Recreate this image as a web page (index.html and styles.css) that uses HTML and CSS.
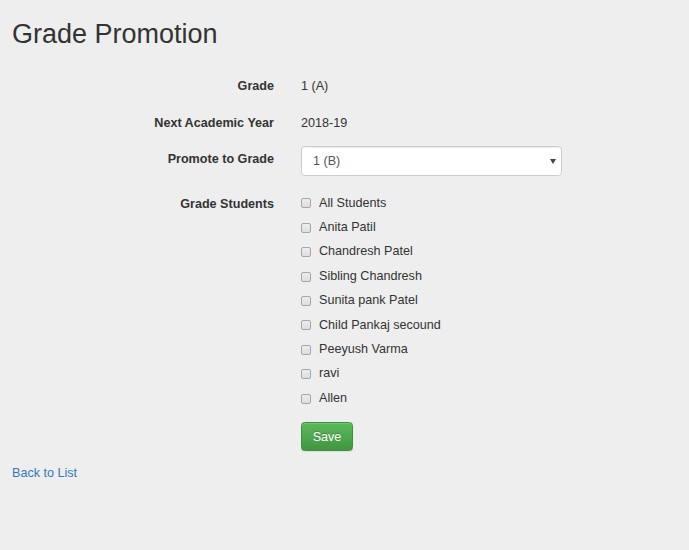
FILE: index.html
```html
<!DOCTYPE html>
<html lang="en">
<head>
<meta charset="utf-8">
<title>Grade Promotion</title>
<link rel="stylesheet" href="styles.css">
</head>
<body>
<div class="page">
  <h2 class="title">Grade Promotion</h2>
  <form class="form">
    <div class="row row-static">
      <div class="label">Grade</div>
      <div class="value">1 (A)</div>
    </div>
    <div class="row row-static row-next">
      <div class="label">Next Academic Year</div>
      <div class="value">2018-19</div>
    </div>
    <div class="row row-select">
      <label class="label">Promote to Grade</label>
      <div class="select-wrap">
        <select class="select">
          <option>1 (B)</option>
        </select>
        <span class="caret"></span>
      </div>
    </div>
    <div class="row row-students">
      <div class="label label-students">Grade Students</div>
      <div class="checks">
        <label class="check"><span class="box"></span>All Students</label>
        <label class="check"><span class="box"></span>Anita Patil</label>
        <label class="check"><span class="box"></span>Chandresh Patel</label>
        <label class="check"><span class="box"></span>Sibling Chandresh</label>
        <label class="check"><span class="box"></span>Sunita pank Patel</label>
        <label class="check"><span class="box"></span>Child Pankaj secound</label>
        <label class="check"><span class="box"></span>Peeyush Varma</label>
        <label class="check"><span class="box"></span>ravi</label>
        <label class="check"><span class="box"></span>Allen</label>
        <button type="button" class="btn-save">Save</button>
      </div>
    </div>
  </form>
  <a class="back" href="#">Back to List</a>
</div>
</body>
</html>
```

FILE: styles.css
```css
html, body {
  margin: 0;
  padding: 0;
  background: #eeeeee;
}
body {
  font-family: "Liberation Sans", Arial, Helvetica, sans-serif;
  font-size: 12.6px;
  color: #333333;
}
.page {
  padding: 0 12px;
}
.title {
  margin: 20px 0 0;
  font-size: 27px;
  line-height: 29.7px;
  font-weight: normal;
  color: #333333;
}
.form {
  margin-top: 23px;
}
.row {
  display: flex;
  gap: 27px;
}
.label {
  width: 262px;
  flex: none;
  text-align: right;
  font-weight: bold;
}
.row-static {
  height: 26px;
  line-height: 26px;
}
.row-next {
  margin-top: 11px;
}
.row-select {
  margin-top: 10px;
}
.row-select .label {
  line-height: 26px;
}
.select-wrap {
  position: relative;
  width: 261px;
  height: 30px;
}
.select {
  appearance: none;
  -webkit-appearance: none;
  box-sizing: border-box;
  width: 100%;
  height: 30px;
  margin: 0;
  padding: 0 24px 0 11px;
  border: 1px solid #cccccc;
  border-radius: 3.6px;
  background: #ffffff;
  font-family: inherit;
  font-size: 12.6px;
  color: #555555;
  box-shadow: inset 0 1px 1px rgba(0, 0, 0, 0.075);
}
.caret {
  position: absolute;
  right: 6px;
  top: 13px;
  width: 0;
  height: 0;
  border-left: 3px solid transparent;
  border-right: 3px solid transparent;
  border-top: 5px solid #444444;
}
.row-students {
  margin-top: 15px;
}
.label-students {
  line-height: 24.4px;
  padding-top: 1px;
}
.checks {
  display: flex;
  flex-direction: column;
  align-items: flex-start;
}
.check {
  display: flex;
  align-items: center;
  height: 24.4px;
  line-height: 24.4px;
}
.box {
  box-sizing: border-box;
  width: 10px;
  height: 10px;
  margin: 1px 8px 0 0;
  border: 1px solid #a6a6a6;
  border-radius: 2px;
  background: linear-gradient(to bottom, #ededed, #dedede);
}
.btn-save {
  margin-top: 12px;
  box-sizing: border-box;
  width: 52px;
  height: 29px;
  padding: 0;
  border: 1px solid #3e8f3e;
  border-radius: 3.6px;
  background-image: linear-gradient(to bottom, #5cb85c 0, #419641 100%);
  box-shadow: inset 0 1px 0 rgba(255, 255, 255, 0.15), 0 1px 1px rgba(0, 0, 0, 0.075);
  color: #ffffff;
  font-family: inherit;
  font-size: 12.6px;
  text-shadow: 0 -1px 0 rgba(0, 0, 0, 0.2);
}
.back {
  display: inline-block;
  margin-top: 13px;
  line-height: 18px;
  color: #337ab7;
  text-decoration: none;
}
```
